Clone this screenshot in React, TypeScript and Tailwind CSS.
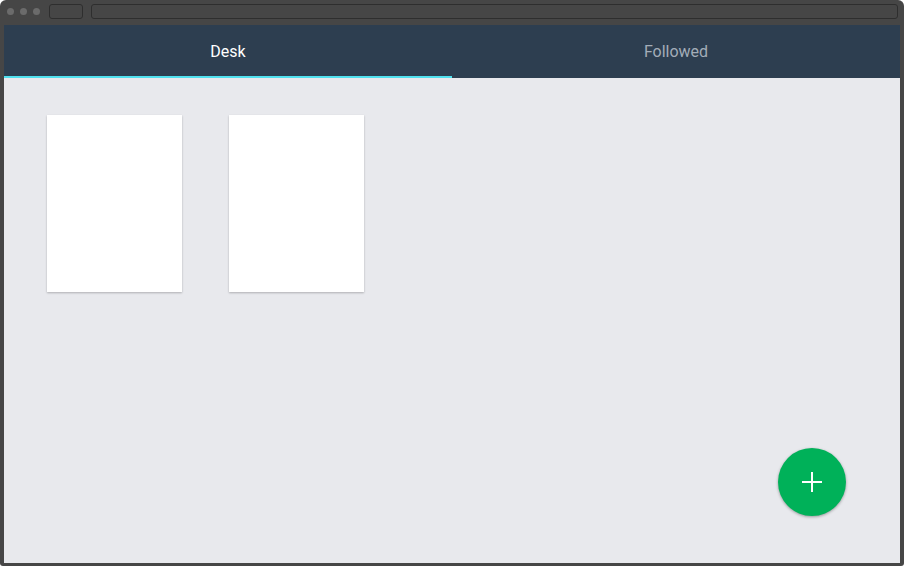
import { useState } from "react";

export default function App() {
  const [tab, setTab] = useState("desk");

  const tabs = [
    { id: "desk", label: "Desk" },
    { id: "followed", label: "Followed" },
  ];

  return (
    <div className="w-[904px] h-[566px] bg-white">
      <div className="w-full h-full flex flex-col bg-[#464646] rounded-t-[6px] rounded-b-[3px] font-['Roboto',sans-serif]">
        {/* Browser chrome */}
        <div className="h-[25px] flex items-center pl-[7px] pr-[6px] pb-[3px] shrink-0">
          <div className="flex gap-[6px]">
            <span className="w-[7px] h-[7px] rounded-full bg-[#6b6b6b]" />
            <span className="w-[7px] h-[7px] rounded-full bg-[#6b6b6b]" />
            <span className="w-[7px] h-[7px] rounded-full bg-[#6b6b6b]" />
          </div>
          <div className="ml-[9px] w-[34px] h-[15px] rounded-[3px] border border-[#2e2e2e]" />
          <div className="ml-[8px] flex-1 h-[15px] rounded-[3px] border border-[#2e2e2e]" />
        </div>

        {/* App */}
        <div className="flex-1 mx-[4px] mb-[3px] flex flex-col bg-[#e8e9ed] relative overflow-hidden">
          {/* Tabs */}
          <nav className="h-[53px] bg-[#2d3e50] flex shrink-0">
            {tabs.map((t) => (
              <button
                key={t.id}
                onClick={() => setTab(t.id)}
                className={`flex-1 flex items-center justify-center pt-[2px] text-[16px] border-b-2 ${
                  tab === t.id
                    ? "text-white border-[#4fe1ef]"
                    : "text-[#a3adb8] border-transparent"
                }`}
              >
                {t.label}
              </button>
            ))}
          </nav>

          {/* Desk cards */}
          <div className="flex gap-[47px] pl-[43px] pt-[37px]">
            <div className="w-[135px] h-[177px] bg-white shadow-[0_1px_2px_rgba(0,0,0,0.25)]" />
            <div className="w-[135px] h-[177px] bg-white shadow-[0_1px_2px_rgba(0,0,0,0.25)]" />
          </div>

          {/* Add button */}
          <button className="absolute right-[54px] bottom-[47px] w-[68px] h-[68px] rounded-full bg-[#00b159] flex items-center justify-center shadow-[0_1px_3px_rgba(0,0,0,0.35)]">
            <svg width="22" height="22" viewBox="0 0 22 22">
              <path d="M11 1v20M1 11h20" stroke="white" strokeWidth="2" />
            </svg>
          </button>
        </div>
      </div>
    </div>
  );
}
